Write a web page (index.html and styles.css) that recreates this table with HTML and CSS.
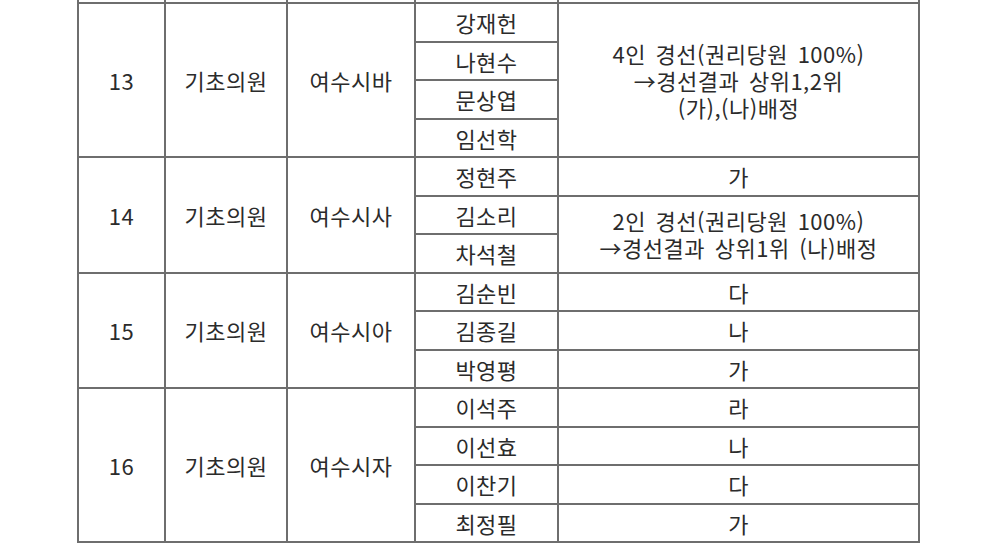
FILE: index.html
```html
<!DOCTYPE html>
<html lang="ko">
<head>
<meta charset="utf-8">
<link rel="stylesheet" href="styles.css">
</head>
<body>
<table class="grid">
  <colgroup>
    <col class="c-no"><col class="c-kind"><col class="c-area"><col class="c-name"><col class="c-note">
  </colgroup>
  <tr class="stub"><td></td><td></td><td></td><td></td><td></td></tr>
  <tr>
    <td rowspan="4">13</td><td rowspan="4">기초의원</td><td rowspan="4">여수시바</td>
    <td>강재헌</td>
    <td rowspan="4" class="note">4인 경선(권리당원 100%)<br>→경선결과 상위1,2위<br>(가),(나)배정</td>
  </tr>
  <tr><td>나현수</td></tr>
  <tr><td>문상엽</td></tr>
  <tr><td>임선학</td></tr>
  <tr>
    <td rowspan="3">14</td><td rowspan="3">기초의원</td><td rowspan="3">여수시사</td>
    <td>정현주</td><td>가</td>
  </tr>
  <tr><td>김소리</td><td rowspan="2" class="note">2인 경선(권리당원 100%)<br>→경선결과 상위1위 (나)배정</td></tr>
  <tr><td>차석철</td></tr>
  <tr>
    <td rowspan="3">15</td><td rowspan="3">기초의원</td><td rowspan="3">여수시아</td>
    <td>김순빈</td><td>다</td>
  </tr>
  <tr><td>김종길</td><td>나</td></tr>
  <tr><td>박영평</td><td>가</td></tr>
  <tr>
    <td rowspan="4">16</td><td rowspan="4">기초의원</td><td rowspan="4">여수시자</td>
    <td>이석주</td><td>라</td>
  </tr>
  <tr><td>이선효</td><td>나</td></tr>
  <tr><td>이찬기</td><td>다</td></tr>
  <tr><td>최정필</td><td>가</td></tr>
</table>
</body>
</html>
```
FILE: styles.css
```css
html, body {
  margin: 0;
  padding: 0;
  background: #fff;
}
.grid {
  border-collapse: collapse;
  table-layout: fixed;
  margin-left: 77px;
  width: 841px;
  font-family: "Noto Sans CJK KR", "Noto Sans", sans-serif;
  font-size: 22px;
  letter-spacing: 0.5px;
  color: #2b2b2b;
}
.c-no { width: 87px; }
.c-kind { width: 122px; }
.c-area { width: 128px; }
.c-name { width: 143px; }
.c-note { width: 361px; }
.grid td {
  border: 2px solid #6e6e6e;
  padding: 0;
  height: 36.5px;
  text-align: center;
  vertical-align: middle;
  line-height: 24px;
  white-space: nowrap;
}
.grid tr.stub td {
  height: 2px;
  border-top: none;
}
.grid td.note {
  line-height: 27px;
  word-spacing: 3px;
}
```
